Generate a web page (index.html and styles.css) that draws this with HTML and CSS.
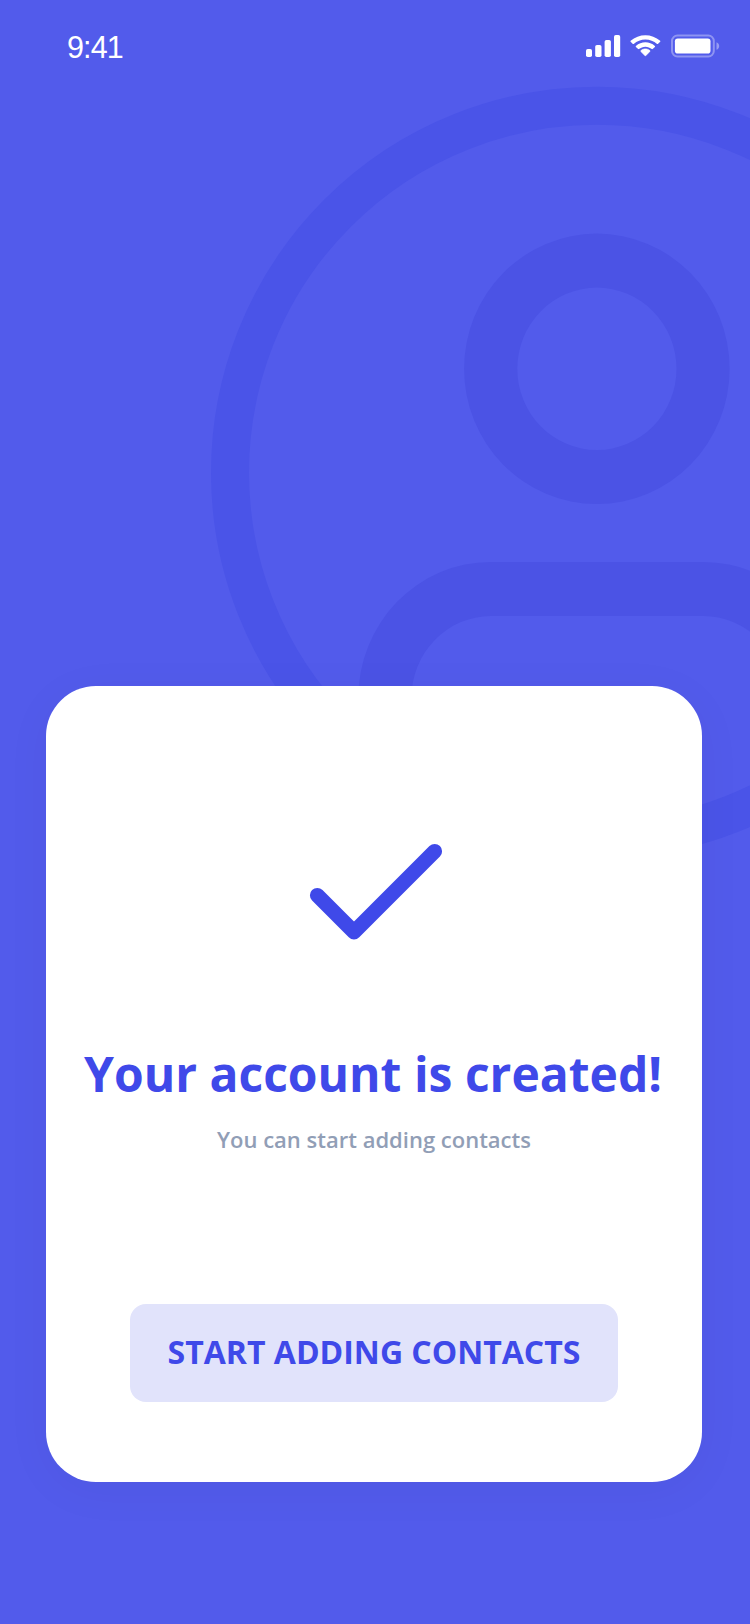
FILE: index.html
```
<!DOCTYPE html>
<html lang="en">
<head>
<meta charset="utf-8">
<title>Account created</title>
<link rel="stylesheet" href="styles.css">
</head>
<body>
<main class="screen">
  <svg class="backdrop" viewBox="0 0 750 1624" fill="none" aria-hidden="true">
    <circle class="backdrop-ring" cx="597" cy="472.7" r="367"/>
    <path class="backdrop-person" fill-rule="evenodd" d="M464.1 368.8a132.75 135.2 0 1 0 265.5 0a132.75 135.2 0 1 0 -265.5 0zM517.3 368.8a79.6 81.2 0 1 0 159.2 0a79.6 81.2 0 1 0 -159.2 0z"/>
    <path class="backdrop-person" d="M358.3 750V698A132.4 136 0 0 1 490.7 562H703.1A132.8 136 0 0 1 835.9 698V750H782.7V698A79.6 82 0 0 0 703.1 616H490.7A79.6 82 0 0 0 411.4 698V750z"/>
  </svg>
  <header class="status-bar">
    <span class="time">9:41</span>
    <span class="indicators">
      <svg class="signal" viewBox="0 0 34 22" fill="#fff"><rect x="0" y="14" width="6" height="8" rx="1.8"/><rect x="9.2" y="10" width="6.3" height="12" rx="1.8"/><rect x="18.6" y="5" width="6.3" height="17" rx="1.8"/><rect x="28" y="0" width="6.2" height="22" rx="1.8"/></svg>
      <svg class="wifi" viewBox="0.5 0 30 22" preserveAspectRatio="none" fill="#fff"><path d="M15.400 4.400c4.200 0 8.200 1.600 11.300 4.500.2.200.6.200.8 0l2.200-2.200c.3-.3.300-.7 0-.9C21.700-1.700 9.100-1.700 1.100 5.800c-.3.200-.3.600 0 .9l2.200 2.200c.2.200.6.200.8 0C7.200 6 11.200 4.400 15.400 4.400z"/><path d="M15.400 11.700c2.300 0 4.500.9 6.200 2.400.2.200.6.200.8 0l2.200-2.200c.3-.3.300-.7 0-.9-5.200-4.900-13.200-4.900-18.400 0-.3.200-.3.600 0 .9l2.200 2.200c.2.200.6.200.8 0 1.700-1.500 3.900-2.400 6.200-2.400z"/><path d="M19.700 16.500c.3-.2.300-.7 0-.9-2.500-2.100-6.100-2.100-8.600 0-.3.200-.3.700 0 .9l3.800 3.900c.3.300.7.300 1 0z" stroke="#fff" stroke-width=".8" stroke-linejoin="round"/></svg>
      <svg class="battery" viewBox="0 0 49 24"><rect x="1" y=".5" width="41.800" height="21" rx="5.500" fill="none" stroke="#fff" stroke-opacity=".35" stroke-width="2"/><rect x="3.900" y="3.500" width="35.600" height="15" rx="2.800" fill="#fff"/><path d="M45.500 7.200v7.600c3.600-1.300 3.600-6.300 0-7.600z" fill="#fff" fill-opacity=".4"/></svg>
    </span>
  </header>
  <section class="card">
    <svg class="check" viewBox="0 0 134 97" fill="none"><path d="M8.300 52.300L45 89L125.700 8.300"/></svg>
    <h1 class="title">Your account is created!</h1>
    <p class="subtitle">You can start adding contacts</p>
    <button class="action" type="button">START ADDING CONTACTS</button>
  </section>
</main>
</body>
</html>
```
FILE: styles.css
```
* {
  box-sizing: border-box;
}

body {
  margin: 0;
  background: #525beb;
  font-family: "Open Sans", "Noto Sans", sans-serif;
}

.screen {
  position: relative;
  display: flex;
  flex-direction: column;
  align-items: flex-start;
  width: 750px;
  height: 1624px;
  overflow: hidden;
  background: #525beb;
}

.backdrop {
  position: absolute;
  inset: 0;
  width: 750px;
  height: 1624px;
}

.backdrop-ring {
  stroke: #4a54e8;
  stroke-width: 38;
}

.backdrop-person {
  fill: #4b53e5;
}

.status-bar {
  position: relative;
  display: flex;
  justify-content: space-between;
  align-items: flex-start;
  width: 100%;
  height: 88px;
  padding: 30px 30px 0 67px;
}

.time {
  color: #fff;
  font-family: "Liberation Sans", Arial, sans-serif;
  font-size: 30.5px;
  line-height: 35px;
  letter-spacing: -0.9px;
}

.indicators {
  display: flex;
  gap: 10px;
  padding-top: 5px;
}

.indicators svg {
  display: block;
  overflow: visible;
}

.signal {
  width: 34px;
  height: 22px;
}

.wifi {
  width: 31px;
  height: 22px;
}

.battery {
  width: 49px;
  height: 24px;
}

.card {
  position: relative;
  display: flex;
  flex-direction: column;
  align-items: center;
  width: 656px;
  height: 796px;
  margin: 598px 0 0 46px;
  padding-top: 157px;
  border-radius: 50px;
  background: #fff;
  box-shadow: 0 8px 50px rgba(0, 0, 0, 0.04);
}

.check {
  display: block;
  width: 134px;
  height: 97px;
  margin-left: 4px;
}

.check path {
  stroke: #3f49e9;
  stroke-width: 14.8;
  stroke-linecap: round;
  stroke-linejoin: round;
}

.title {
  margin: 101px 2px 0 0;
  color: #3f49e9;
  font-size: 48px;
  font-weight: 700;
  line-height: 66px;
  white-space: nowrap;
}

.subtitle {
  margin: 17px 0 0;
  color: #919eb6;
  font-size: 22px;
  font-weight: 600;
  line-height: 30px;
}

.action {
  width: 488px;
  height: 98px;
  margin-top: 150px;
  padding: 0 0 3px;
  border: 0;
  border-radius: 16px;
  background: #e1e3fb;
  color: #3f49e9;
  font: 700 32px/44px "Open Sans", "Noto Sans", sans-serif;
  white-space: nowrap;
}
```
